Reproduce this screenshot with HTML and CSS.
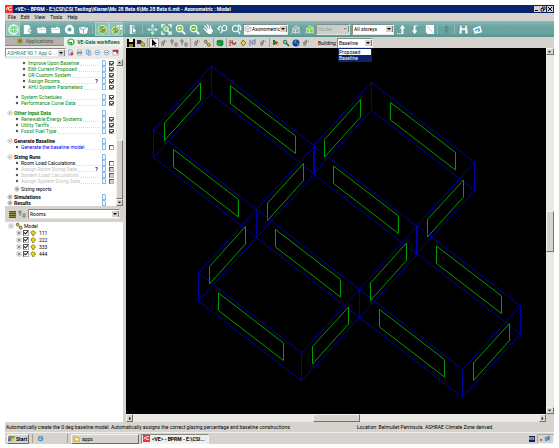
FILE: index.html
```html
<!DOCTYPE html>
<html lang="en">
<head>
    <meta charset="UTF-8">
    <meta name="viewport" content="width=device-width, initial-scale=1.0">
    <title>&lt;VE&gt; - BPRM - Axonometric : Model</title>
    <link rel="stylesheet" href="styles.css">
</head>
<body>
    <!-- shared icons -->
    <svg class="sprite" aria-hidden="true">
        <symbol id="logo" viewBox="0 0 8 8"><path fill="#e33" d="M0 0h8v8H0z"/><path fill="none" stroke="#fff" d="M1 5l2-3 1 3h3M4 2h3"/></symbol>
        <symbol id="up" viewBox="0 0 6 6"><path d="M1 4h4L3 2z"/></symbol>
        <symbol id="down" viewBox="0 0 6 6"><path d="M1 2h4L3 4z"/></symbol>
        <symbol id="left" viewBox="0 0 6 6"><path d="M4 1v4L2 3z"/></symbol>
        <symbol id="right" viewBox="0 0 6 6"><path d="M2 1v4l2-2z"/></symbol>
        <symbol id="doc" viewBox="0 0 6 6"><path fill="#8dbbe8" d="M1 0h3l1 1v5H1z"/><path fill="#eef7ff" d="M2 1h2v4H2z"/></symbol>
        <symbol id="minus" viewBox="0 0 6 6"><circle cx="3" cy="3" r="2.200" fill="#fff" stroke="#aaa" stroke-width=".6"/><path stroke="#666" stroke-width=".7" d="M1.800 3h2.400"/></symbol>
        <symbol id="plus" viewBox="0 0 6 6"><circle cx="3" cy="3" r="2.200" fill="#fff" stroke="#999" stroke-width=".6"/><path stroke="#555" stroke-width=".7" d="M1.500 3h3M3 1.500v3"/></symbol>
        <symbol id="bullet" viewBox="0 0 6 6"><circle cx="3" cy="3" r="1.200" fill="#555"/></symbol>
        <symbol id="box-plus" viewBox="0 0 6 6"><path fill="#eee" stroke="#aaa" stroke-width=".6" d="M1 1h4v4H1z"/><path stroke="#444" stroke-width=".7" d="M2 3h2M3 2v2"/></symbol>
        <symbol id="box-minus" viewBox="0 0 6 6"><path fill="#fff" stroke="#aaa" stroke-width=".6" d="M1 1h4v4H1z"/><path stroke="#444" stroke-width=".7" d="M2 3h2"/></symbol>
        <symbol id="room" viewBox="0 0 6 6"><path fill="#e8dc10" stroke="#655f00" stroke-width=".6" d="M1 2l2-1.400L5.300 2v1.600L4 4.200V5.600H2.400V4.200L1 3.400z"/></symbol>
        <symbol id="globe" viewBox="0 0 12 12"><circle cx="6" cy="6" r="5" fill="#6cc878" stroke="#fff" stroke-width="1.200"/><path fill="none" stroke="#fff" stroke-width=".6" d="M1 6h10M6 1v10M6 1C2 4 2 8 6 11M6 1c4 3 4 7 0 10"/></symbol>
        <symbol id="page-add" viewBox="0 0 12 12"><path fill="#fff" d="M2 1h5l2 2v8H2z"/><path fill="#dff5df" stroke="#5a9" stroke-width=".5" d="M8 5h1.500v1.500H11V8H9.500v1.500H8V8H6.500V6.500H8z"/></symbol>
        <symbol id="folder" viewBox="0 0 12 12"><path fill="#fff" d="M1 4h6V2.500L11 5v5H2z"/><path stroke="#9cc" stroke-width=".7" d="M3 6h7"/></symbol>
        <symbol id="disc" viewBox="0 0 12 12"><circle cx="6" cy="6" r="3.700" fill="none" stroke="#fff" stroke-width="2.800"/><path fill="#fff" d="M7 8h4v3H7z"/></symbol>
        <symbol id="box" viewBox="0 0 12 12"><path fill="#fff" d="M1 4l5-1 5 1-1 6-4 1-4-1z"/><path fill="none" stroke="#48a" stroke-width=".8" d="M2 5l4 1 4-3M6 6v4"/></symbol>
        <symbol id="gauge" viewBox="0 0 12 12"><circle cx="6" cy="6" r="4.500" fill="#67b82e" stroke="#dff0c8"/><path fill="none" stroke="#fff" d="M3 7l3-2 3-1"/><circle cx="6" cy="6" r="1.100" fill="#d42"/></symbol>
        <symbol id="gauge-grid" viewBox="0 0 12 12"><circle cx="5" cy="7" r="4" fill="#67b82e" stroke="#dff0c8"/><path fill="none" stroke="#fff" d="M2 8l5-2"/><circle cx="5" cy="7" r="1" fill="#d42"/><path fill="#fff" d="M7 1h2v2H7zM10 1h2v2h-2zM10 4h2v2h-2z"/></symbol>
        <symbol id="select" viewBox="0 0 12 12"><path fill="#e4f1f0" d="M2 1h3v10H2zM6 1h1v10H6z"/><path fill="#fff" stroke="#577" stroke-width=".6" d="M5 3l5 5-2 .3L9 11H7.500L6.700 8.700 5 10z"/></symbol>
        <symbol id="pan" viewBox="0 0 12 12"><path fill="#e4f4f2" d="M6 0l2 3H4zM6 12l2-3H4zM0 6l3-2v4zM12 6L9 4v4z"/><circle cx="6" cy="6" r="1.700" fill="none" stroke="#e4f4f2"/></symbol>
        <symbol id="zoom-box" viewBox="0 0 12 12"><path fill="none" stroke="#fff" stroke-width="1.400" d="M4 1H1v3M8 1h3v3M4 11H1V8M8 11h3V8"/><circle cx="5.500" cy="5.500" r="2.500" fill="#8fd04a" stroke="#fff"/><path stroke="#fff" stroke-width="1.500" d="M7 7l3 3"/></symbol>
        <symbol id="zoom-in" viewBox="0 0 12 12"><circle cx="5" cy="5" r="3.600" fill="#73bd35" stroke="#fff" stroke-width="1.200"/><path stroke="#fff" stroke-width="2" d="M8 8l3 3"/><path stroke="#fff" d="M3 5h4M5 3v4"/></symbol>
        <symbol id="zoom-out" viewBox="0 0 12 12"><circle cx="5" cy="5" r="3.600" fill="#73bd35" stroke="#fff" stroke-width="1.200"/><path stroke="#fff" stroke-width="2" d="M8 8l3 3"/><path stroke="#fff" d="M3 5h4"/></symbol>
        <symbol id="hand" viewBox="0 0 12 12"><path fill="none" stroke="#fff" stroke-width="1.300" stroke-linecap="round" d="M1 5l4 4M2 2l4 5M5 1l2 5M8 2l1 5"/><path fill="#fff" d="M4 7l5-2 2 2-2 4H6z"/></symbol>
        <symbol id="zoom-back" viewBox="0 0 12 12"><circle cx="8" cy="4.500" r="2.800" fill="none" stroke="#fff" stroke-width="1.200"/><path fill="none" stroke="#fff" stroke-width="1.300" d="M6 7l-2 3M4 2L1 5l2 2"/></symbol>
        <symbol id="zoom-all" viewBox="0 0 12 12"><circle cx="5" cy="5" r="3.400" fill="none" stroke="#fff" stroke-width="1.200"/><path fill="none" stroke="#fff" stroke-width="1.400" d="M8 8l2 3M8 1c3 1 3 4 2 6"/></symbol>
        <symbol id="house" viewBox="0 0 12 12"><path fill="#9aa9a8" stroke="#e8efee" stroke-width=".8" d="M3 5l3-3 4 2v5l-4 1-3-1z"/><path fill="none" stroke="#e8efee" stroke-width=".8" d="M3 5l3 1 4-2M6 6v4M1 11l2-2M11 11L9 9"/></symbol>
        <symbol id="house-green" viewBox="0 0 12 12"><path fill="#82cd3c" stroke="#e8efee" stroke-width=".8" d="M3 5l3-3 4 2v5l-4 1-3-1z"/><path fill="none" stroke="#e8efee" stroke-width=".8" d="M3 5l3 1 4-2M6 6v4M1 11l2-2M11 11L9 9"/></symbol>
        <symbol id="level-up" viewBox="0 0 12 12"><path fill="#fff" d="M7 1l3 4H8v6H6V5H4z"/><path stroke="#fff" stroke-width="1.500" stroke-dasharray="1 1" d="M1 10.500h5"/></symbol>
        <symbol id="level-down" viewBox="0 0 12 12"><path fill="#fff" d="M5 11L2 7h2V2h2v5h2z"/><path stroke="#fff" stroke-width="1.500" stroke-dasharray="1 1" d="M5 1.800h4"/></symbol>
        <symbol id="sheet" viewBox="0 0 12 12"><path fill="#fff" d="M2 1h9v10H4L2 9z"/><path stroke="#b9cccc" stroke-width=".9" d="M3 2l7 8"/></symbol>
        <symbol id="north" viewBox="0 0 12 12"><path fill="none" stroke="#5a8887" stroke-width="1.100" d="M6 11V2M4 5l2-3 2 3M4 8l2-2 2 2"/></symbol>
        <symbol id="binoculars" viewBox="0 0 12 12"><path fill="#eef6f5" stroke="#537f7d" stroke-width=".6" d="M2 1h2.500v3h3V1H10l1 7v3H7.500V7h-3v4H1V8z"/></symbol>
        <symbol id="photo" viewBox="0 0 12 12"><path fill="#fff" d="M1 5l8-3 2 7-8 2z"/><path fill="#57a6c8" d="M3 6l5-2 1 4-5 1z"/><path fill="#fff" d="M3 9l3-3 1 2z"/></symbol>
        <symbol id="save" viewBox="0 0 8 8"><path d="M0 0h8v8H0z"/><path fill="#ecebd0" d="M2 0h4v3H2z"/><path fill="#8a8730" d="M2 5h4v3H2z"/></symbol>
        <symbol id="truck" viewBox="0 0 8 8"><path fill="#333" d="M0 1h4l1 2v2H0z"/><path fill="#d8cd14" stroke="#333" stroke-width=".6" d="M3 4l2-1 3 2v2H5z"/></symbol>
        <symbol id="arrow" viewBox="0 0 8 8"><path d="M2 0l5 5H5l1 2.500H5L4 5.500 2 7z"/></symbol>
        <symbol id="probe" viewBox="0 0 8 8"><path fill="none" stroke="#777" stroke-width=".9" d="M2 7V3l3-2M5 1L3 7M6 3l1-1M1 4h4"/></symbol>
        <symbol id="nodes" viewBox="0 0 8 8"><path fill="none" stroke="#777" d="M1 1h2v2H1zM5 4h2v3H5zM2 3v3"/></symbol>
        <symbol id="nodes-yellow" viewBox="0 0 8 8"><path fill="#e6da16" stroke="#444" stroke-width=".7" d="M1 2l2-1 1 1v2L2 4zM4 5l2-1 1 1v2L5 7z"/></symbol>
        <symbol id="cube" viewBox="0 0 8 8"><path fill="#1fae2c" stroke="#064" stroke-width=".6" d="M1 2l3-1 3 1v4L5 7 1 6z"/><path fill="none" stroke="#063" stroke-width=".6" d="M1 2l4 1 2-1M5 3v4"/></symbol>
        <symbol id="cut" viewBox="0 0 8 8"><path fill="none" stroke="#b33" d="M1 1v6M1 3l6 2M3 1l1 5"/><path stroke="#363" d="M5 6l2-3"/></symbol>
        <symbol id="diamond" viewBox="0 0 8 8"><path fill="#e2d414" stroke="#554" stroke-width=".7" d="M4 1l3 3-3 3-2-3z"/></symbol>
        <symbol id="panel" viewBox="0 0 8 8"><path fill="none" stroke="#557cc0" d="M1 1v6M3 2h3v3H3z"/><path stroke="#c55" d="M5 1h2"/></symbol>
        <symbol id="flag" viewBox="0 0 8 8"><path fill="#1a7d2a" d="M1 1h2v5H1z"/><path fill="#c33" d="M3 2l3 1v3L3 5z"/><path fill="#ddd020" d="M5 4h2v3H5z"/></symbol>
        <symbol id="key" viewBox="0 0 8 8"><path stroke="#262" stroke-width="1.400" d="M3 3l4 4"/><circle cx="3" cy="3" r="1.800" fill="#62d4d8" stroke="#262" stroke-width=".8"/></symbol>
        <symbol id="earth" viewBox="0 0 8 8"><circle cx="4" cy="4" r="3.500" fill="#1238b8"/><path fill="#2cb53a" d="M2 2l2-1 1 2-2 2zM5 4l2 0-1 3-1-1z"/></symbol>
        <symbol id="tick-doc" viewBox="0 0 8 8"><path fill="#e4f2ff" stroke="#4f93d8" stroke-width=".8" d="M2 1h3l1 1v5H2z"/><path fill="#d33" d="M4 4h3v3H4z"/></symbol>
        <symbol id="print" viewBox="0 0 8 8"><path fill="#8b949c" d="M1 3h6v3H1z"/><path fill="#fff" stroke="#778" stroke-width=".5" d="M2 1h4v2H2zM2 5h4v2H2z"/></symbol>
        <symbol id="page" viewBox="0 0 8 8"><path fill="#e4f2ff" stroke="#4f93d8" stroke-width=".8" d="M1.500 1h3v4.500h-3zM3.500 2.500h3v4.500h-3z"/></symbol>
        <symbol id="ring" viewBox="0 0 8 8"><circle cx="4" cy="4" r="2.700" fill="#eff7ff" stroke="#5e98cc" stroke-width=".8"/><path stroke="#357" stroke-width=".8" d="M2.500 4h3"/></symbol>
        <symbol id="axis" viewBox="0 0 8 8"><path fill="#fff" stroke="#999" stroke-width=".7" d="M4 1l3 1.500v3L4 7 1 5.500v-3zM4 4v3M4 4l3-1.500M4 4L1 2.500"/></symbol>
        <symbol id="cal" viewBox="0 0 8 8"><path fill="#fff" stroke="#78a" stroke-width=".6" d="M1 1h6v6H1z"/><path fill="#c22" d="M1 1h6v2H1zM5 3h2v2H5z"/></symbol>
        <symbol id="gaia" viewBox="0 0 8 8"><circle cx="4" cy="4" r="3" fill="#eaffea" stroke="#2da84b" stroke-width="1.200"/><path fill="#2da84b" d="M1 4h4v3z"/></symbol>
        <symbol id="pin" viewBox="0 0 8 8"><circle cx="4" cy="4" r="2.800" fill="#8a9d32"/><circle cx="4" cy="4" r="1" fill="#c53b2c"/></symbol>

        <!-- one zone seen in axonometric view, origin at its back corner -->
        <symbol id="zone" overflow="visible">
            <g class="edge">
                <path d="M0 0L103 80L45 143.500L-58 63.500Z"/>
                <path d="M0 28L103 108L45 171.500L-58 91.500Z"/>
                <path d="M0 0v28M103 80v28M45 143.500v28M-58 63.500v28"/>
            </g>
            <g class="glazing">
                <path d="M-11 17v17.500L-47 74.500V57Z"/>
                <path d="M19 20v17.500L84 87.500V70Z"/>
                <path d="M-38 83.500v17.500L27 151V133.500Z"/>
                <path d="M92 97.500v17L56 154.500V137Z"/>
            </g>
        </symbol>
    </svg>

    <div class="window">
        <header class="titlebar">
            <svg class="icon-8"><use href="#logo"/></svg>
            <h1 class="title">&lt;VE&gt; - BPRM - E:\CSI\CSI Testing\Kieran\Ms 28 Beta 6\Ms 28 Beta 6.mit - Axonometric : Model</h1>
            <button class="win-btn" aria-label="Minimize"><svg viewBox="0 0 6 6"><path d="M1 4h3v1H1z"/></svg></button>
            <button class="win-btn" aria-label="Restore"><svg viewBox="0 0 6 6"><path fill="none" stroke="#000" stroke-width=".8" d="M2.500 2V1H5v2.500H4M1 2.500h2.500V5H1z"/></svg></button>
            <button class="win-btn close" aria-label="Close"><svg viewBox="0 0 6 6"><path stroke="#000" d="M1 1l4 4M5 1L1 5"/></svg></button>
        </header>

        <nav class="menu">
            <button>File</button>
            <button>Edit</button>
            <button>View</button>
            <button>Tools</button>
            <button>Help</button>
        </nav>

        <div class="toolbar">
            <button class="tool pressed" aria-label="Home"><svg><use href="#globe"/></svg></button>
            <button class="tool" aria-label="New"><svg><use href="#page-add"/></svg></button>
            <button class="tool" aria-label="Open"><svg><use href="#folder"/></svg></button>
            <button class="tool" aria-label="Import"><svg><use href="#folder"/></svg></button>
            <button class="tool" aria-label="Save"><svg><use href="#disc"/></svg></button>
            <button class="tool" aria-label="Archive"><svg><use href="#box"/></svg></button>
            <span class="sep wide"></span>
            <button class="tool pressed" aria-label="Navigator"><svg><use href="#gauge"/></svg></button>
            <button class="tool pressed" aria-label="Navigator grid"><svg><use href="#gauge-grid"/></svg></button>
            <span class="sep"></span>
            <button class="tool" aria-label="Select"><svg><use href="#select"/></svg></button>
            <span class="sep wide"></span>
            <button class="tool" aria-label="Pan"><svg><use href="#pan"/></svg></button>
            <button class="tool" aria-label="Zoom window"><svg><use href="#zoom-box"/></svg></button>
            <button class="tool" aria-label="Zoom in"><svg><use href="#zoom-in"/></svg></button>
            <button class="tool" aria-label="Zoom out"><svg><use href="#zoom-out"/></svg></button>
            <button class="tool" aria-label="Drag"><svg><use href="#hand"/></svg></button>
            <button class="tool" aria-label="Previous zoom"><svg><use href="#zoom-back"/></svg></button>
            <button class="tool" aria-label="Fit view"><svg><use href="#zoom-all"/></svg></button>
            <label class="combo combo-view">
                <svg class="icon-8"><use href="#axis"/></svg>
                <select aria-label="View"><option>Axonometric</option></select>
                <span class="drop"><svg><use href="#down"/></svg></span>
            </label>
            <button class="tool" aria-label="Rotate"><svg><use href="#house"/></svg></button>
            <button class="tool" aria-label="Rotate model"><svg><use href="#house-green"/></svg></button>
            <label class="combo combo-level disabled">
                <select aria-label="Level" disabled><option>Model</option></select>
                <span class="drop"><svg><use href="#down"/></svg></span>
            </label>
            <label class="combo combo-storey">
                <select aria-label="Storey"><option>All storeys</option></select>
                <span class="drop"><svg><use href="#down"/></svg></span>
            </label>
            <button class="tool" aria-label="Up"><svg><use href="#level-up"/></svg></button>
            <button class="tool" aria-label="Down"><svg><use href="#level-down"/></svg></button>
            <button class="tool" aria-label="Sheet"><svg><use href="#sheet"/></svg></button>
            <span class="sep"></span>
            <button class="tool" aria-label="North"><svg><use href="#north"/></svg></button>
            <span class="sep"></span>
            <button class="tool" aria-label="Find"><svg><use href="#binoculars"/></svg></button>
            <button class="tool" aria-label="Picture"><svg><use href="#photo"/></svg></button>
        </div>

        <main class="main">
            <aside class="side">
                <div class="tabs">
                    <button class="tab"><svg class="icon-8"><use href="#pin"/></svg>Applications</button>
                    <button class="tab active"><svg class="icon-8"><use href="#gaia"/></svg>VE-Gaia workflows</button>
                </div>
                <div class="flow-bar">
                    <label class="combo combo-flow">
                        <select aria-label="Workflow"><option>ASHRAE 90.1 App G ...</option></select>
                        <span class="drop"><svg><use href="#down"/></svg></span>
                    </label>
                    <button class="mini" aria-label="Report"><svg><use href="#tick-doc"/></svg></button>
                    <button class="mini" aria-label="Print"><svg><use href="#print"/></svg></button>
                    <button class="mini" aria-label="Notes"><svg><use href="#page"/></svg></button>
                    <button class="mini" aria-label="Expand"><svg><use href="#ring"/></svg></button>
                    <button class="mini" aria-label="Collapse"><svg><use href="#ring"/></svg></button>
                    <button class="mini" aria-label="Schedule"><svg><use href="#cal"/></svg></button>
                </div>

                <div class="flow">
                    <ul class="steps">
                        <li class="step deep"><svg><use href="#bullet"/></svg><label for="s1">Improve Upon Baseline</label><i></i><svg><use href="#doc"/></svg><input type="checkbox" id="s1" checked></li>
                        <li class="step deep"><svg><use href="#bullet"/></svg><label for="s2">Edit Current Proposed</label><i></i><svg><use href="#doc"/></svg><input type="checkbox" id="s2" checked></li>
                        <li class="step deep"><svg><use href="#bullet"/></svg><label for="s3">OR Custom System</label><i></i><svg><use href="#doc"/></svg><input type="checkbox" id="s3" checked></li>
                        <li class="step deep"><svg><use href="#bullet"/></svg><label for="s4">Assign Rooms</label><i></i><b class="help">?</b><svg><use href="#doc"/></svg><input type="checkbox" id="s4" checked></li>
                        <li class="step deep"><svg><use href="#bullet"/></svg><label for="s5">AHU System Parameters</label><i></i><svg><use href="#doc"/></svg><input type="checkbox" id="s5" checked></li>
                        <li class="step spaced"><svg><use href="#bullet"/></svg><label for="s6">System Schedules</label><i></i><svg><use href="#doc"/></svg><input type="checkbox" id="s6" checked></li>
                        <li class="step"><svg><use href="#bullet"/></svg><label for="s7">Performance Curve Data</label><i></i><svg><use href="#doc"/></svg><input type="checkbox" id="s7" checked></li>
                        <li class="step head spaced"><svg><use href="#minus"/></svg><span>Other Input Data</span><i></i><svg><use href="#doc"/></svg></li>
                        <li class="step"><svg><use href="#bullet"/></svg><label for="s8">Renewable Energy Systems</label><i></i><svg><use href="#doc"/></svg><input type="checkbox" id="s8" checked></li>
                        <li class="step"><svg><use href="#bullet"/></svg><label for="s9">Utility Tariffs</label><i></i><svg><use href="#doc"/></svg><input type="checkbox" id="s9" checked></li>
                        <li class="step"><svg><use href="#bullet"/></svg><label for="s10">Fossil Fuel Type</label><i></i><svg><use href="#doc"/></svg><input type="checkbox" id="s10" checked></li>
                        <li class="step head plain spaced"><svg><use href="#minus"/></svg><span>Generate Baseline</span><i></i><svg><use href="#doc"/></svg></li>
                        <li class="step current"><svg><use href="#bullet"/></svg><label for="s11">Generate the baseline model</label><i></i><svg><use href="#doc"/></svg><input type="checkbox" id="s11"></li>
                        <li class="step head plain spaced"><svg><use href="#minus"/></svg><span>Sizing Runs</span><i></i><svg><use href="#doc"/></svg></li>
                        <li class="step plain"><svg><use href="#bullet"/></svg><label for="s12">Room Load Calculations</label><i></i><svg><use href="#doc"/></svg><input type="checkbox" id="s12"></li>
                        <li class="step off"><svg><use href="#bullet"/></svg><label for="s13">Assign Room Sizing Data</label><i></i><b class="help">?</b><svg><use href="#doc"/></svg><input type="checkbox" id="s13" disabled></li>
                        <li class="step off"><svg><use href="#bullet"/></svg><label for="s14">System Load Calculations</label><i></i><svg><use href="#doc"/></svg><input type="checkbox" id="s14" disabled></li>
                        <li class="step off"><svg><use href="#bullet"/></svg><label for="s15">Assign System Sizing Data</label><i></i><svg><use href="#doc"/></svg><input type="checkbox" id="s15" disabled></li>
                        <li class="step plain nudge"><svg><use href="#plus"/></svg><span>Sizing reports</span></li>
                        <li class="step head plain nudge"><svg><use href="#plus"/></svg><span>Simulations</span><i></i><svg><use href="#doc"/></svg></li>
                        <li class="step head plain"><svg><use href="#plus"/></svg><span>Results</span><i></i><svg><use href="#doc"/></svg></li>
                    </ul>
                    <div class="scroll vertical flow-scroll">
                        <button aria-label="Scroll up"><svg><use href="#up"/></svg></button>
                        <span class="before"></span><span class="thumb"></span><span class="after"></span>
                        <button aria-label="Scroll down"><svg><use href="#down"/></svg></button>
                    </div>
                </div>

                <div class="filter">
                    <button class="list-btn" aria-label="List"></button>
                    <svg class="icon-8"><use href="#nodes"/></svg>
                    <label class="combo combo-rooms">
                        <select aria-label="Show"><option>Rooms</option></select>
                        <span class="drop"><svg><use href="#down"/></svg></span>
                    </label>
                </div>

                <ul class="model">
                    <li><svg><use href="#box-minus"/></svg><svg class="icon-8"><use href="#nodes-yellow"/></svg>Model</li>
                    <li class="room"><svg><use href="#box-plus"/></svg><input type="checkbox" id="r1" checked><svg><use href="#room"/></svg><label for="r1">111</label></li>
                    <li class="room"><svg><use href="#box-plus"/></svg><input type="checkbox" id="r2" checked><svg><use href="#room"/></svg><label for="r2">222</label></li>
                    <li class="room"><svg><use href="#box-plus"/></svg><input type="checkbox" id="r3" checked><svg><use href="#room"/></svg><label for="r3">333</label></li>
                    <li class="room"><svg><use href="#box-plus"/></svg><input type="checkbox" id="r4" checked><svg><use href="#room"/></svg><label for="r4">444</label></li>
                </ul>
            </aside>

            <section class="work">
                <div class="model-bar">
                    <button class="small" aria-label="Save"><svg><use href="#save"/></svg></button>
                    <button class="small" aria-label="Load"><svg><use href="#truck"/></svg></button>
                    <span class="sep"></span>
                    <button class="small pressed" aria-label="Pointer"><svg><use href="#arrow"/></svg></button>
                    <button class="small" aria-label="Probe"><svg><use href="#probe"/></svg></button>
                    <button class="small" aria-label="Group"><svg><use href="#nodes"/></svg></button>
                    <button class="small" aria-label="Ungroup"><svg><use href="#nodes"/></svg></button>
                    <span class="sep"></span>
                    <button class="small" aria-label="Query"><svg><use href="#probe"/></svg></button>
                    <button class="small" aria-label="Assign"><svg><use href="#nodes-yellow"/></svg></button>
                    <span class="sep"></span>
                    <button class="small" aria-label="Cube"><svg><use href="#cube"/></svg></button>
                    <span class="sep"></span>
                    <button class="small" aria-label="Section"><svg><use href="#cut"/></svg></button>
                    <button class="small" aria-label="Thermal"><svg><use href="#diamond"/></svg></button>
                    <button class="small" aria-label="Panel"><svg><use href="#panel"/></svg></button>
                    <button class="small" aria-label="Filter"><svg><use href="#probe"/></svg></button>
                    <span class="sep"></span>
                    <button class="small" aria-label="Flag"><svg><use href="#flag"/></svg></button>
                    <button class="small" aria-label="Inspect"><svg><use href="#key"/></svg></button>
                    <button class="small" aria-label="Location"><svg><use href="#earth"/></svg></button>
                    <button class="small" aria-label="Options"><svg><use href="#probe"/></svg></button>
                    <label class="building" for="building">Building</label>
                    <div class="combo combo-building">
                        <select id="building"><option>Baseline</option><option>Proposed</option></select>
                        <span class="drop"><svg><use href="#down"/></svg></span>
                        <ul class="list">
                            <li>Proposed</li>
                            <li class="on">Baseline</li>
                        </ul>
                    </div>
                </div>

                <div class="view">
                    <svg class="canvas" viewBox="0 0 420 366" preserveAspectRatio="xMinYMin meet">
                        <use href="#zone" x="85.500" y="18"/>
                        <use href="#zone" x="245.500" y="34.500"/>
                        <use href="#zone" x="130.500" y="161.500"/>
                        <use href="#zone" x="291.500" y="178"/>
                    </svg>
                    <div class="scroll vertical view-y">
                        <button aria-label="Scroll up"><svg><use href="#up"/></svg></button>
                        <span class="before"></span><span class="thumb"></span><span class="after"></span>
                        <button aria-label="Scroll down"><svg><use href="#down"/></svg></button>
                    </div>
                    <div class="scroll view-x">
                        <button aria-label="Scroll left"><svg><use href="#left"/></svg></button>
                        <span class="before"></span><span class="thumb"></span><span class="after"></span>
                        <button aria-label="Scroll right"><svg><use href="#right"/></svg></button>
                    </div>
                    <div class="corner"></div>
                </div>
            </section>
        </main>

        <footer class="status">
            <span>Automatically create the 0 deg baseline model. Automatically assigns the correct glazing percentage and baseline constructions</span>
            <span>Location: Belmullet Peninsula. ASHRAE Climate Zone derived.</span>
        </footer>

        <div class="taskbar">
            <button class="start"><svg viewBox="0 0 8 8"><path fill="#e2492f" d="M1 1h3v3H0z"/><path fill="#4caf3c" d="M4 1h4L7 4H4z"/><path fill="#2f6fd6" d="M0 4h4L3 7H0z"/><path fill="#f0c020" d="M4 4h3L6 7H3z"/></svg>Start</button>
            <span class="sep"></span>
            <button class="browser" aria-label="Browser"><svg viewBox="0 0 8 8"><circle cx="4" cy="4" r="2.500" fill="none" stroke="#2f8fe0" stroke-width="1.300"/><path fill="none" stroke="#2f8fe0" d="M2 4h4"/><path fill="none" stroke="#eab92c" stroke-width=".8" d="M1 7c0-3 3-6 6-6"/></svg></button>
            <span class="sep"></span>
            <button class="task"><svg viewBox="0 0 8 8"><path fill="#f2d25c" stroke="#a88a20" stroke-width=".6" d="M1 2h2l1 1h3v4H1z"/><path fill="#fff" d="M3 4h3v2H3z"/></svg>apps</button>
            <button class="task active"><svg><use href="#logo"/></svg>&lt;VE&gt; - BPRM - E:\CSI...</button>
            <div class="tray">
                <span class="lang">EN</span>
                <div class="notify">
                    <span>«</span>
                    <svg viewBox="0 0 8 8"><path fill="#5aa6e6" stroke="#2b66b0" stroke-width=".5" d="M1 3l3-1 1 3-3 2zM5 1l2 1-1 4-2-1z"/></svg>
                </div>
            </div>
        </div>
    </div>
</body>
</html>
```
FILE: styles.css
```css
* {
    box-sizing: border-box;
}
body {
    margin: 0;
    background: #fff;
    color: #000;
    font-family: Roboto, "Liberation Sans", Arial, sans-serif;
    font-size: 5px;
    line-height: 6px;
}
ul {
    list-style: none;
    margin: 0;
    padding: 0;
}
button, select {
    font: inherit;
    color: inherit;
    margin: 0;
    padding: 0;
    border: 0;
    background: none;
}
svg {
    display: block;
    flex: none;
    width: 6px;
    height: 6px;
}
.sprite {
    position: absolute;
    width: 0;
    height: 0;
}
.icon-8 {
    width: 8px;
    height: 8px;
}
.window {
    display: flex;
    flex-direction: column;
    min-height: 100vh;
    padding: 5px 5px 4px;
}

/* title and menu */
.titlebar {
    display: flex;
    align-items: center;
    height: 8px;
    padding-right: 1px;
    background: #0a246a;
    color: #fff;
}
.title {
    flex: 1;
    margin: 0;
    padding-left: 2px;
    font-size: 5px;
    font-weight: bold;
    white-space: nowrap;
}
.win-btn {
    width: 6px;
    height: 6px;
    background: #d6d3ce;
}
.win-btn.close {
    margin-left: 1px;
}
.menu {
    display: flex;
    gap: 5px;
    height: 8px;
    padding-left: 3px;
    background: #d6d3ce;
}

/* main toolbar */
.toolbar {
    display: flex;
    align-items: center;
    height: 16px;
    padding-left: 1px;
    background: linear-gradient(#86bab7, #69a4a1 40%, #69a4a1 75%, #5a9390);
}
.tool {
    display: flex;
    align-items: center;
    justify-content: center;
    width: 14px;
    height: 14px;
}
.tool svg {
    width: 11px;
    height: 11px;
}
.tool.pressed {
    background: #8fc0b8;
    border: 1px solid #a9d0ca;
}
.sep {
    width: 1px;
    height: 9px;
    margin: 0 1px;
    background: #a5a29c;
}
.toolbar .sep {
    background: #8fbab7;
}
.sep.wide {
    margin: 0 2px;
}

/* drop-downs */
.combo {
    position: relative;
    display: flex;
    align-items: center;
    height: 9px;
    background: #fff;
    border: 1px solid #8a8a86;
    border-right-color: #e6e4e0;
    border-bottom-color: #e6e4e0;
}
.combo select {
    flex: 1;
    min-width: 0;
    height: 7px;
    padding-left: 1px;
    appearance: none;
    outline: none;
}
.drop {
    background: #d6d3ce;
    border-right: 1px solid #85827c;
    pointer-events: none;
}
.combo.disabled {
    background: #c9cfcb;
    color: #8c918e;
}
.combo.disabled svg {
    fill: #8c918e;
}
.combo-view {
    width: 45px;
    height: 11px;
}
.combo-view select {
    padding-left: 0;
}
.combo-level {
    width: 34px;
    height: 11px;
    margin-right: 2px;
}
.combo-storey {
    width: 42px;
    height: 11px;
}

/* left side */
.main {
    display: flex;
    flex: 1;
}
.side {
    display: flex;
    flex-direction: column;
    flex: none;
    width: 121px;
    padding-right: 3px;
    background: #d6d3ce;
}
.tabs {
    display: flex;
    height: 9px;
}
.tab {
    display: flex;
    flex: 1;
    align-items: center;
    justify-content: center;
    gap: 2px;
    background: #b5b2ac;
    border-bottom: 1px solid #8d8b86;
    color: #3a5a4a;
    white-space: nowrap;
}
.tab.active {
    background: #f2f1ee;
    border-bottom: 0;
    color: #11663a;
    font-weight: bold;
}
.flow-bar {
    display: flex;
    align-items: center;
    height: 13px;
    background: #eceae6;
}
.combo-flow {
    width: 61px;
    color: #2f7f86;
}
.mini {
    display: flex;
    justify-content: center;
    width: 9px;
}
.mini svg {
    width: 7px;
    height: 7px;
}
.flow {
    display: flex;
    background: #fff;
}
.steps {
    flex: 1;
    padding: 1px 2px 0 0;
}
.step {
    display: flex;
    align-items: center;
    gap: 1px;
    height: 6px;
    padding-left: 9px;
    color: #078a12;
    white-space: nowrap;
}
.step i {
    flex: 1;
    height: 5px;
    border-bottom: 1px dotted #ddd;
}
.step.deep {
    padding-left: 16px;
}
.step.head {
    padding-left: 2px;
    padding-right: 7px;
    font-weight: bold;
}
.step.head i {
    border: 0;
}
.step.spaced {
    margin-top: 4px;
}
.step.nudge {
    margin-top: 2px;
}
.step.plain {
    color: #000;
}
.step.current {
    color: #0000f0;
}
.step.off {
    color: #c4c2ba;
}
.help {
    width: 5px;
    color: #1a1aa8;
    font-size: 6px;
}
input[type="checkbox"] {
    appearance: none;
    display: grid;
    flex: none;
    place-items: center;
    width: 6px;
    height: 6px;
    margin: 0;
    background: #fff;
    border: 1px solid #b5b3ae;
    border-top-color: #555;
    border-left-color: #555;
}
input[type="checkbox"]:checked::before {
    content: "";
    width: 4px;
    height: 4px;
    background: #222;
    clip-path: polygon(0 35%, 40% 60%, 100% 0, 100% 35%, 40% 100%, 0 70%);
}
input[type="checkbox"]:disabled {
    background: #d6d3ce;
}
.step input {
    width: 5px;
    height: 5px;
    margin-left: 1px;
}

/* scrollbars */
.scroll {
    display: flex;
    background: #eae8e4;
}
.scroll.vertical {
    flex-direction: column;
}
.scroll button {
    background: #d6d3ce;
    border: 1px solid #f4f3f0;
    border-right-color: #77746e;
    border-bottom-color: #77746e;
}
.thumb {
    background: #d6d3ce;
    border: 1px solid #f4f3f0;
    border-right-color: #77746e;
    border-bottom-color: #77746e;
}
.scroll svg {
    width: 5px;
    height: 5px;
}
.flow-scroll {
    width: 7px;
}
.flow-scroll .before {
    flex: 76;
}
.flow-scroll .thumb {
    flex: 58;
}
.flow-scroll .after {
    flex: 0;
}

/* room filter and model tree */
.filter {
    display: flex;
    align-items: center;
    gap: 2px;
    height: 16px;
    padding: 0 3px 0 4px;
}
.list-btn {
    width: 7px;
    height: 7px;
    background: repeating-linear-gradient(#55532a 0 1px, #8d8a4c 1px 2px);
}
.combo-rooms {
    flex: 1;
    height: 10px;
}
.model {
    flex: 1;
    background: #fff;
}
.model li {
    display: flex;
    align-items: center;
    gap: 1px;
    height: 7px;
    padding-left: 3px;
}
.model .room {
    padding-left: 11px;
}
.model .room label {
    padding-left: 2px;
}

/* model view */
.work {
    display: flex;
    flex: 1;
    flex-direction: column;
    min-width: 0;
}
.model-bar {
    display: flex;
    align-items: center;
    height: 11px;
    background: #d6d3ce;
}
.small {
    display: flex;
    align-items: center;
    justify-content: center;
    width: 10px;
    height: 10px;
}
.small svg {
    width: 8px;
    height: 8px;
}
.small.pressed {
    background: #f3f2ef;
    border: 1px solid #a5a29c;
}
.building {
    padding: 0 1px 0 7px;
}
.combo-building {
    width: 36px;
    height: 10px;
}
.list {
    position: absolute;
    top: 9px;
    left: 0;
    right: 0;
    background: #fff;
    border: 1px solid #0a246a;
}
.list .on {
    background: #0a246a;
    color: #fff;
}
.view {
    display: grid;
    flex: 1;
    grid-template-columns: 1fr 8px;
    grid-template-rows: 1fr 8px;
    background: #000;
}
.canvas {
    width: 100%;
    height: 100%;
}
.edge {
    fill: none;
    stroke: #0000a8;
    stroke-width: 1;
}
.glazing {
    fill: none;
    stroke: #009c00;
    stroke-width: 1;
}
.view-y .before {
    flex: 157;
}
.view-y .thumb {
    flex: 40;
}
.view-y .after {
    flex: 156;
}
.view-x .before {
    flex: 181;
}
.view-x .thumb {
    flex: 45;
}
.view-x .after {
    flex: 180;
}
.corner {
    background: #d6d3ce;
}

/* status and taskbar */
.status {
    display: grid;
    grid-template-columns: 64% 36%;
    align-items: center;
    height: 10px;
    padding-left: 1px;
    background: #d6d3ce;
    white-space: nowrap;
}
.taskbar {
    display: flex;
    align-items: center;
    gap: 2px;
    height: 12px;
    padding-left: 2px;
    background: #d6d3ce;
    border-top: 1px solid #efeeea;
}
.taskbar svg {
    width: 7px;
    height: 7px;
}
.start, .task {
    display: flex;
    align-items: center;
    gap: 2px;
    height: 10px;
    border: 1px solid #f4f3f0;
    border-right-color: #6f6c66;
    border-bottom-color: #6f6c66;
}
.start {
    width: 22px;
    gap: 1px;
    font-weight: bold;
}
.browser {
    width: 28px;
    padding-left: 1px;
}
.task {
    width: 68px;
    padding-left: 1px;
}
.task.active {
    background: #efeeea;
    border-color: #8a8780 #f4f3f0 #f4f3f0 #8a8780;
    font-weight: bold;
}
.tray {
    display: flex;
    align-items: center;
    gap: 2px;
    margin-left: auto;
}
.lang {
    width: 6px;
    background: #0a246a;
    color: #fff;
    font-size: 4px;
    text-align: center;
}
.notify {
    display: flex;
    align-items: center;
    gap: 2px;
    height: 10px;
    padding: 0 2px;
    border: 1px solid #aaa7a1;
    border-right-color: #f4f3f0;
    border-bottom-color: #f4f3f0;
}
```
